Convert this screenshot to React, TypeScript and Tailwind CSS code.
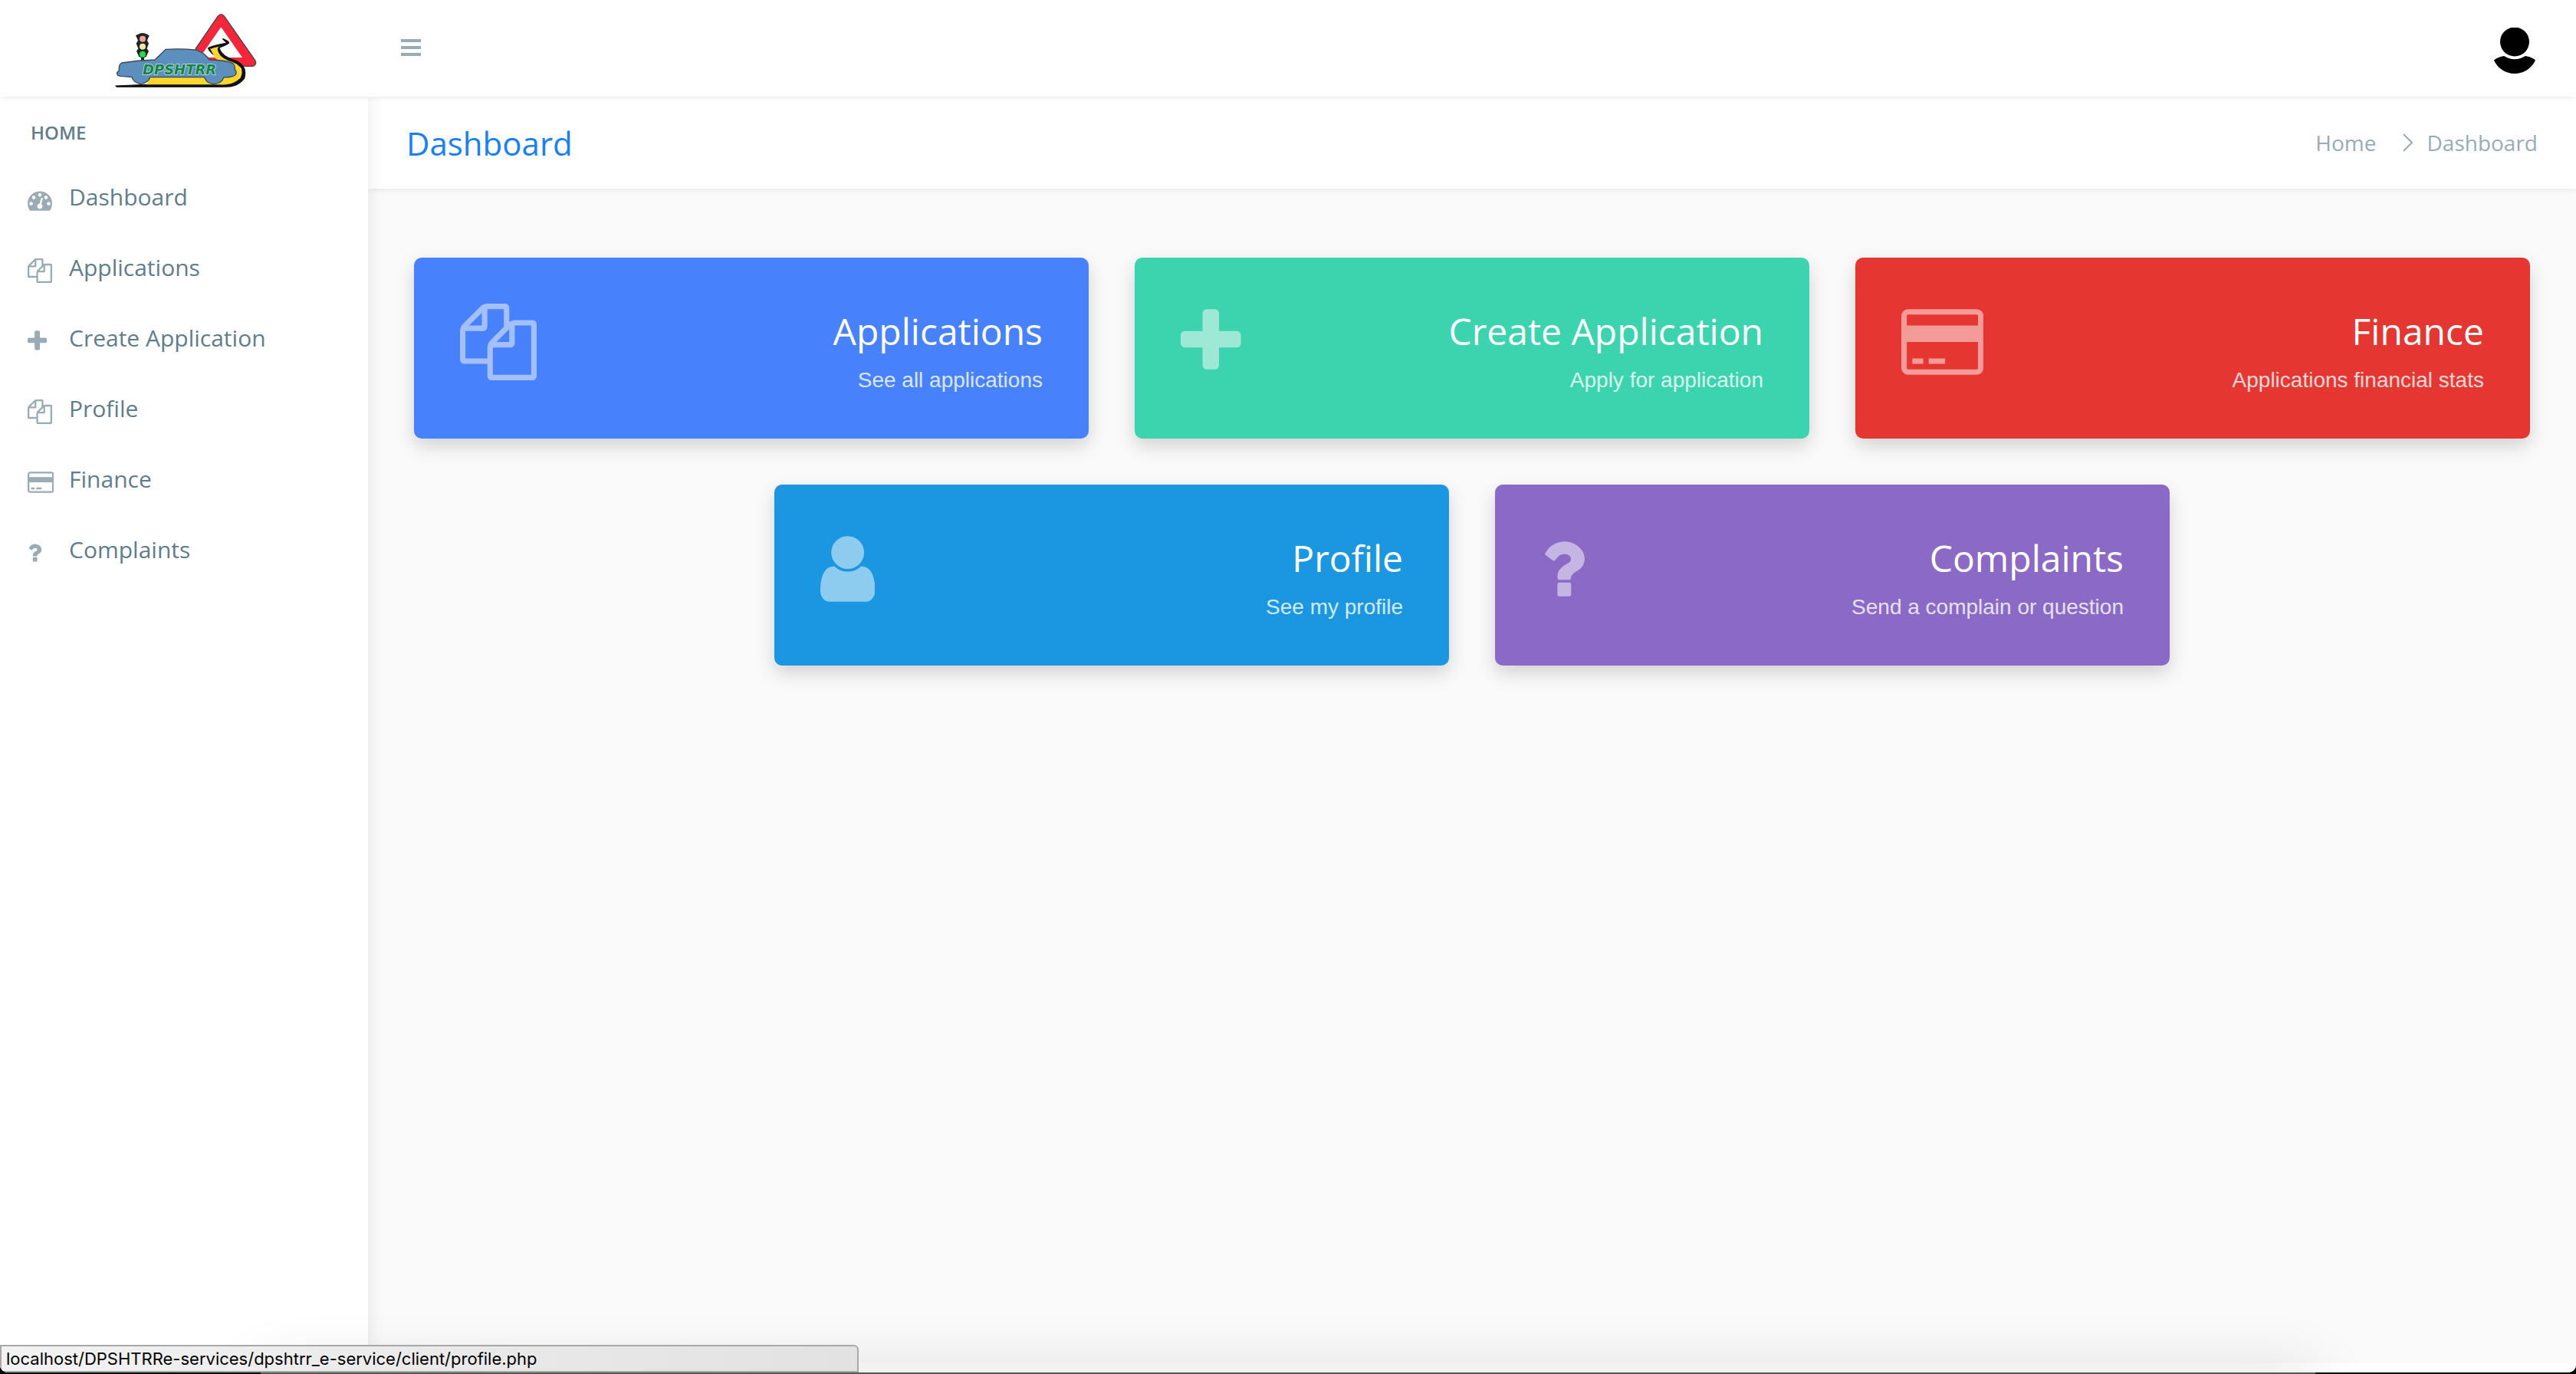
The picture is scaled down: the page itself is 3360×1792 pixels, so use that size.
import React from "react";

type Glyph = { viewBox: string; d: string };

const GLYPHS = {
  gauge: {
    viewBox: "0 0 1792 1792",
    d: "M384 1152q0-53-37.5-90.5t-90.5-37.5-90.5 37.5-37.5 90.5 37.5 90.5 90.5 37.5 90.5-37.5 37.5-90.5zm192-448q0-53-37.5-90.5t-90.5-37.5-90.5 37.5-37.5 90.5 37.5 90.5 90.5 37.5 90.5-37.5 37.5-90.5zm428 481l101-382q6-26-7.5-48.5t-38.5-29.5-48 6.5-30 39.5l-101 382q-60 5-107 43.5t-63 98.5q-20 77 20 146t117 89 146-20 89-117q16-60-6-117t-72-91zm660-33q0-53-37.5-90.5t-90.5-37.5-90.5 37.5-37.5 90.5 37.5 90.5 90.5 37.5 90.5-37.5 37.5-90.5zm-640-640q0-53-37.5-90.5t-90.5-37.5-90.5 37.5-37.5 90.5 37.5 90.5 90.5 37.5 90.5-37.5 37.5-90.5zm448 192q0-53-37.5-90.5t-90.5-37.5-90.5 37.5-37.5 90.5 37.5 90.5 90.5 37.5 90.5-37.5 37.5-90.5zm320 448q0 261-141 483-19 29-54 29h-1402q-35 0-54-29-141-221-141-483 0-182 71-348t191-286 286-191 348-71 348 71 286 191 191 286 71 348z",
  },
  files: {
    viewBox: "0 0 1792 1792",
    d: "M1696 384q40 0 68 28t28 68v1216q0 40-28 68t-68 28h-960q-40 0-68-28t-28-68v-288h-544q-40 0-68-28t-28-68v-672q0-40 20-88t48-76l408-408q28-28 76-48t88-20h416q40 0 68 28t28 68v328q68-40 128-40h416zm-544 213l-299 299h299v-299zm-640-384l-299 299h299v-299zm196 647l316-316v-416h-384v416q0 40-28 68t-68 28h-416v640h512v-256q0-40 20-88t48-76zm956 804v-1152h-384v416q0 40-28 68t-68 28h-416v640h896z",
  },
  plus: {
    viewBox: "192 0 1408 1792",
    d: "M1600 736v192q0 40-28 68t-68 28h-416v416q0 40-28 68t-68 28h-192q-40 0-68-28t-28-68v-416h-416q-40 0-68-28t-28-68v-192q0-40 28-68t68-28h416v-416q0-40 28-68t68-28h192q40 0 68 28t28 68v416h416q40 0 68 28t28 68z",
  },
  card: {
    viewBox: "0 0 1920 1792",
    d: "M1760 128q66 0 113 47t47 113v1216q0 66-47 113t-113 47h-1600q-66 0-113-47t-47-113v-1216q0-66 47-113t113-47h1600zm-1600 128q-13 0-22.5 9.5t-9.5 22.5v224h1664v-224q0-13-9.5-22.5t-22.5-9.5h-1600zm1600 1280q13 0 22.5-9.5t9.5-22.5v-608h-1664v608q0 13 9.5 22.5t22.5 9.5h1600zm-1504-128v-128h256v128h-256zm384 0v-128h384v128h-384z",
  },
  user: {
    viewBox: "256 0 1280 1792",
    d: "M1536 1399q0 109-62.5 187t-150.5 78h-854q-88 0-150.5-78t-62.5-187q0-85 8.5-160.5t31.5-152 58.5-131 94-89 134.5-34.5q131 128 313 128t313-128q76 0 134.5 34.5t94 89 58.5 131 31.5 152 8.5 160.5zm-256-887q0 159-112.5 271.5t-271.5 112.5-271.5-112.5-112.5-271.5 112.5-271.5 271.5-112.5 271.5 112.5 112.5 271.5z",
  },
  question: {
    viewBox: "384 0 1024 1792",
    d: "M1088 1256v240q0 16-12 28t-28 12h-240q-16 0-28-12t-12-28v-240q0-16 12-28t28-12h240q16 0 28 12t12 28zm316-600q0 54-15.5 101t-35 76.5-55 59.5-57.5 43.5-61 35.5q-41 23-68.5 65t-27.5 67q0 17-12 32.5t-28 15.5h-240q-15 0-25.5-18.5t-10.5-37.5v-45q0-83 65-156.5t143-108.5q59-27 84-56t25-76q0-42-46.5-74t-107.5-32q-65 0-108 29-35 25-107 115-13 16-31 16-12 0-25-8l-164-125q-13-10-15.5-25t5.5-28q160-266 464-266 80 0 161 31t146 83 106 127.5 41 158.5z",
  },
} satisfies Record<string, Glyph>;

type GlyphName = keyof typeof GLYPHS;

function Icon({ name, className }: { name: GlyphName; className: string }) {
  const glyph = GLYPHS[name];
  return (
    <svg viewBox={glyph.viewBox} className={className} fill="currentColor" aria-hidden="true">
      <path d={glyph.d} />
    </svg>
  );
}

function Logo() {
  return (
    <svg viewBox="45 30 570 318" className="h-[106px] w-[190px]" role="img" aria-label="DPSHTRR">
      {/* warning sign */}
      <path d="M462 64Q475 48 488 64L608 236Q616 252 600 259H385Q362 256 372 236L376 190Z" fill="#f5263a" stroke="#4a4246" strokeWidth="4" />
      <path d="M475 106L558 225H392Z" fill="#fff" />
      {/* road */}
      <path d="M62 336L200 330H450Q520 334 552 306Q572 262 530 248L470 232Q430 208 424 188Q440 178 500 168L482 152L504 166L468 188Q478 222 540 240Q580 262 566 308Q540 342 490 340H66Z" fill="#111" stroke="#111" strokeWidth="3" />
      <path d="M432 190L478 180Q458 190 466 206Q476 230 520 242Q566 262 552 300Q530 334 470 331H182L200 300H450L500 262Q470 240 450 226Q440 204 432 190Z" fill="#fbd72b" />
      <path d="M434 189Q450 180 500 169L482 152Q506 162 505 168Q488 180 466 186Q460 196 474 214Q488 230 536 240" fill="none" stroke="#111" strokeWidth="5" />
      {/* traffic light */}
      <path d="M150 134Q168 124 186 134L194 139L186 158L192 170L185 190L192 200L182 222L174 226V240H162V226L154 222L144 200L151 190L143 170L150 158L141 139Z" fill="#1f2624" />
      <circle cx="168" cy="152" r="12" fill="#f2a09c" />
      <circle cx="168" cy="182" r="12" fill="#f2e6a4" />
      <circle cx="168" cy="212" r="12" fill="#1fe04a" />
      {/* car */}
      <path d="M86 246Q150 236 216 234L258 193Q320 189 380 196Q412 208 430 234Q500 236 522 248Q532 262 528 270Q538 280 532 292Q520 304 486 302Q478 328 444 328Q416 326 410 302H198Q188 326 158 328Q132 322 126 302L84 298Q66 298 68 284L76 276Q74 252 86 246Z" fill="#5c8fbe" stroke="#3a4a56" strokeWidth="4" />
      <text
        x="168"
        y="291"
        fontSize="54"
        className="font-['DejaVu_Sans',sans-serif] font-bold italic"
        fill="#118442"
        stroke="#c4dde6"
        strokeWidth="5"
        paintOrder="stroke"
      >
        DPSHTRR
      </text>
    </svg>
  );
}

const NAV: { label: string; icon: GlyphName }[] = [
  { label: "Dashboard", icon: "gauge" },
  { label: "Applications", icon: "files" },
  { label: "Create Application", icon: "plus" },
  { label: "Profile", icon: "files" },
  { label: "Finance", icon: "card" },
  { label: "Complaints", icon: "question" },
];

type Tile = { title: string; note: string; icon: GlyphName; color: string };

const TILES: Tile[] = [
  { title: "Applications", note: "See all applications", icon: "files", color: "bg-[#4782fc]" },
  { title: "Create Application", note: "Apply for application", icon: "plus", color: "bg-[#3bd4ae]" },
  { title: "Finance", note: "Applications financial stats", icon: "card", color: "bg-[#e53632]" },
  { title: "Profile", note: "See my profile", icon: "user", color: "bg-[#1a97e0]" },
  { title: "Complaints", note: "Send a complain or question", icon: "question", color: "bg-[#8a6ac6]" },
];

function TileCard({ title, note, icon, color }: Tile) {
  return (
    <a
      href="#"
      className={`flex w-[calc((100%-120px)/3)] items-start justify-between rounded-[10px] px-[60px] pt-[60px] pb-12 text-white shadow-[0_10px_24px_rgba(0,0,0,0.16)] ${color}`}
    >
      <Icon name={icon} className="h-[100px] w-auto opacity-50" />
      <div className="text-right">
        <h2 className="text-5xl leading-[72px]">{title}</h2>
        <p className="font-['Liberation_Sans',sans-serif] text-[28px] leading-[56px] text-white/80">{note}</p>
      </div>
    </a>
  );
}

export default function App() {
  return (
    <div className="flex min-h-screen flex-col bg-black font-['Open_Sans',sans-serif]">
      <div className="relative flex flex-1 flex-col overflow-hidden rounded-b-[10px] bg-[#fafafa]">
        <header className="z-20 flex h-[126px] items-center bg-white shadow-[0_0_10px_rgba(0,0,0,0.1)]">
          <a href="#" className="flex w-[480px] justify-center">
            <Logo />
          </a>
          <button type="button" aria-label="Toggle menu" className="ml-[42px] text-[#99abb4]">
            <svg viewBox="0 0 28 24" className="h-6 w-7" fill="currentColor">
              <path d="M1 0h26v4H1zM1 9h26v4H1zM1 18h26v4H1z" />
            </svg>
          </button>
          <button type="button" aria-label="Account" className="mr-[50px] ml-auto">
            <svg viewBox="0 0 60 60" className="mt-1.5 h-[60px] w-[60px]">
              <circle cx="30" cy="18.500" r="19" />
              <path d="M16 37Q30 45.500 44 37Q53 38.500 57 42.500C53 52 43 60 30 60S7 52 3 42.500Q7 38.500 16 37Z" />
            </svg>
          </button>
        </header>

        <div className="flex flex-1">
          <nav className="z-10 w-[480px] shrink-0 bg-white shadow-[2px_0_20px_rgba(0,0,0,0.08)]">
            <h3 className="px-10 pt-[29px] pb-[19px] text-2xl leading-9 font-semibold text-[#607d8b]">HOME</h3>
            <ul>
              {NAV.map((item) => (
                <li key={item.label}>
                  <a href="#" className="flex h-[92px] items-center px-9 text-[30px] text-[#607d8b]">
                    <span className="mt-[10px] w-[54px]">
                      <Icon name={item.icon} className="h-8 w-auto text-[#99abb4]" />
                    </span>
                    {item.label}
                  </a>
                </li>
              ))}
            </ul>
          </nav>

          <main className="flex flex-1 flex-col">
            <div className="flex h-[120px] items-center justify-between bg-white px-[50px] shadow-[0_0_10px_rgba(0,0,0,0.1)]">
              <h1 className="text-[42px] text-[#1580ff]">Dashboard</h1>
              <ol className="flex items-center text-[28px] text-[#99abb4]">
                <li>
                  <a href="#">Home</a>
                </li>
                <li aria-hidden="true" className="pr-[18px] pl-[34px]">
                  <svg viewBox="0 0 14 24" className="h-6 w-[14px]" fill="none" stroke="currentColor" strokeWidth="2">
                    <path d="M1 1L12 12L1 23" />
                  </svg>
                </li>
                <li>Dashboard</li>
              </ol>
            </div>
            <section className="flex flex-wrap justify-center gap-[60px] px-[60px] pt-[90px] pb-10">
              {TILES.map((tile) => (
                <TileCard key={tile.title} {...tile} />
              ))}
            </section>
            <footer className="mt-auto h-3 bg-white" />
          </main>
        </div>

        {/* soft shade cast along the bottom edge of the window */}
        <div className="pointer-events-none absolute right-[340px] -bottom-10 left-[340px] z-20 h-10 shadow-[0_0_80px_rgba(0,0,0,0.16)]" />

        <div className="absolute bottom-0 left-0 z-30 h-9 w-1/3 rounded-tr-md rounded-bl-md border-2 border-[#a8a8a8] bg-linear-to-r from-[#f2f2f2] to-[#e2e2e2] pl-1.5 font-['Inter',sans-serif] text-[22px] leading-8 text-black">
          localhost/DPSHTRRe-services/dpshtrr_e-service/client/profile.php
        </div>
      </div>
      <div className="flex h-0.5">
        <div className="mr-[340px] ml-[340px] flex-1 bg-[#555753]" />
      </div>
    </div>
  );
}
